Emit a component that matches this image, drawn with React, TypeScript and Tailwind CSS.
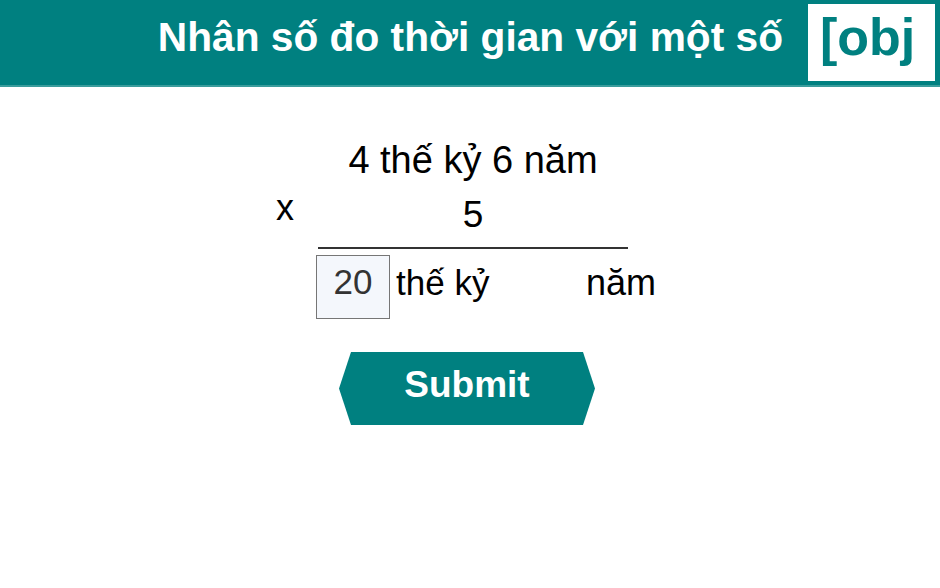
import { useState } from "react";

export default function App() {
  const [answer, setAnswer] = useState("20");

  return (
    <div className="w-[940px] h-[588px] bg-white font-['Liberation_Sans',Arial,sans-serif] overflow-hidden">
      {/* header */}
      <div className="h-[87px] bg-[#008080] border-b-2 border-[#3a9c9c] flex items-start justify-end pr-[5px]">
        <div className="text-white font-bold text-[40.7px] leading-none mt-[17px] mr-[25px] whitespace-nowrap">
          Nhân số đo thời gian với một số
        </div>
        <div className="w-[127px] h-[77px] mt-[4px] bg-white pl-[12px] pt-[7px]">
          <div className="text-[#008080] font-bold text-[52px] leading-none whitespace-nowrap">[obj</div>
        </div>
      </div>

      {/* problem */}
      <div className="pl-[276px] pt-[54px]">
        <div className="w-[352px] text-black">
          <div className="pl-[42px] text-center text-[38px] leading-none">4 thế kỷ 6 năm</div>
          <div className="flex items-start h-[37px] mt-[17px]">
            <div className="w-[42px] -mt-[6px] text-[36px] leading-none">x</div>
            <div className="flex-1 text-center text-[37px] leading-none">5</div>
          </div>
          <div className="ml-[42px] mt-[14px] h-[2px] bg-[#333]" />
        </div>
        <div className="flex items-start mt-[6px] ml-[40px] text-[35px] leading-none text-black">
          <input
            value={answer}
            onChange={(e) => setAnswer(e.target.value)}
            className="shrink-0 w-[74px] h-[64px] pb-[10px] border border-[#767676] bg-[#f4f7fc] text-[#333] text-[35px] text-center outline-none"
          />
          <span className="shrink-0 ml-[6px] mt-[10px] w-[190px]">thế kỷ</span>
          <span className="shrink-0 mt-[10px] text-[36px]">năm</span>
        </div>
      </div>

      {/* submit */}
      <div className="pl-[339px] mt-[33px]">
        <button className="w-[256px] h-[73px] pb-[8px] bg-[#008080] text-white font-bold text-[37px] [clip-path:polygon(12px_0,calc(100%-12px)_0,100%_50%,calc(100%-12px)_100%,12px_100%,0_50%)]">
          Submit
        </button>
      </div>
    </div>
  );
}
